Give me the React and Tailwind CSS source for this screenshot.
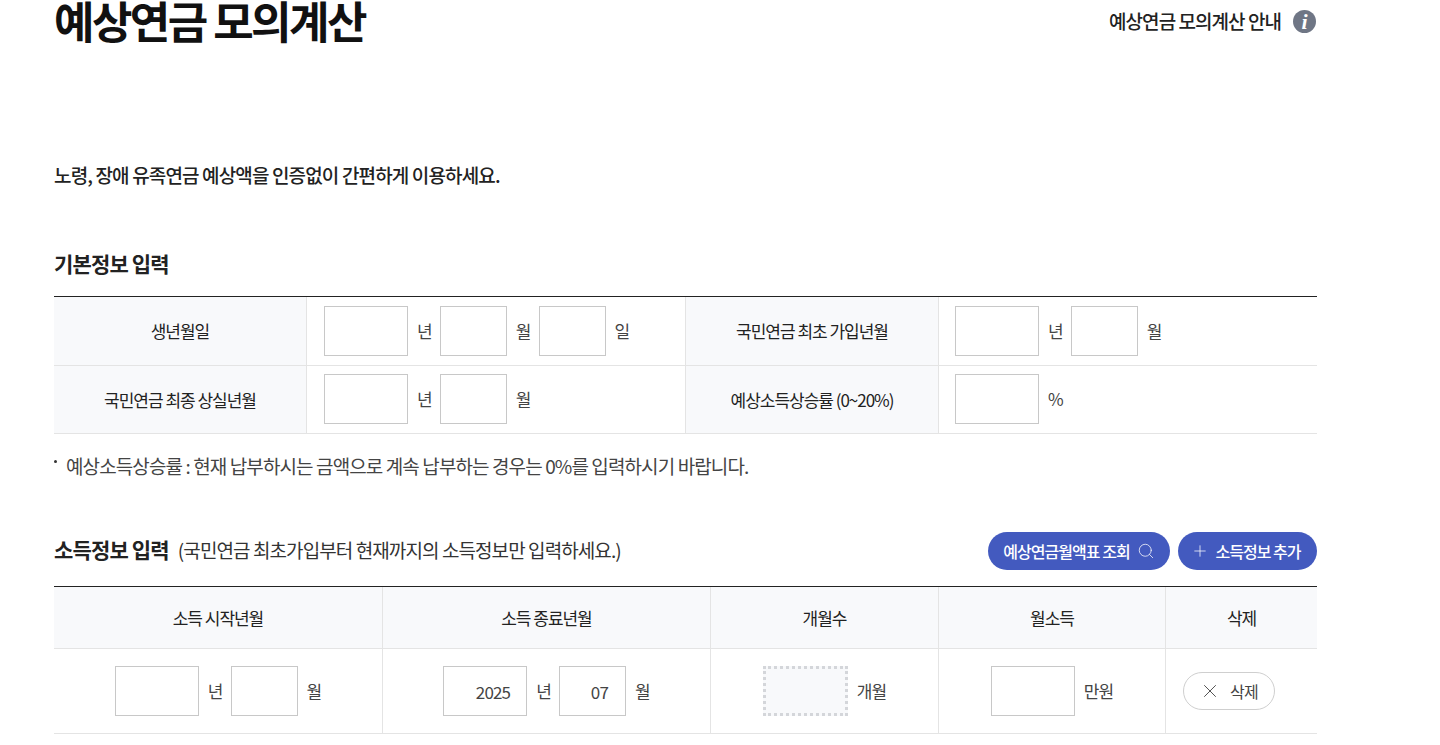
import React from 'react';
import { Search, Plus, X } from 'lucide-react';

const Box = ({ w = 'w-[84px]', value = '', pr = 'pr-[16px]', dotted = false }) => (
  <div
    className={`${w} h-[50px] flex items-center justify-end ${pr} pt-[2px] text-[17px] tracking-[-0.05em] text-[#444] ${
      dotted ? 'border-[3px] border-dotted border-[#d4d6da] bg-[#f8f9fb]' : 'border border-[#c8c8c8] bg-white'
    }`}
  >
    {value}
  </div>
);

const Unit = ({ children }) => <span className="text-[17px] tracking-[-0.05em] text-[#444] ml-[9px] mr-[8px] last:mr-0">{children}</span>;

const Th = ({ children, border = true }) => (
  <div className={`flex items-center justify-center bg-[#f8f9fb] border-b border-[#e4e4e4] text-[17px] text-[#222] tracking-[-0.06em] ${border ? 'border-r' : ''}`}>
    {children}
  </div>
);

const Td = ({ children, border = true, className = '' }) => (
  <div className={`flex items-center border-b border-[#e4e4e4] ${border ? 'border-r' : ''} ${className}`}>{children}</div>
);

const App = () => {
  return (
    <div className="w-[1440px] h-[745px] overflow-hidden bg-white font-['Noto_Sans_CJK_KR','Noto_Sans',sans-serif]">
      <div className="ml-[54px] w-[1263px]">
        <div className="flex items-start justify-between h-[58px]">
          <h1 className="mt-[-10px] text-[44px] leading-[60px] font-bold text-[#111] tracking-[-0.058em]">예상연금 모의계산</h1>
          <div className="flex items-center mt-[10px] mr-[1px]">
            <span className="text-[19px] leading-[24px] font-medium text-[#222] tracking-[-0.05em] mt-[-2px]">예상연금 모의계산 안내</span>
            <span className="ml-[12px] w-[23px] h-[23px] rounded-full bg-[#6f7685] text-white flex items-center justify-center text-[22px] font-bold italic font-['Liberation_Serif',serif]">i</span>
          </div>
        </div>

        <p className="mt-[103px] text-[19px] leading-[28px] font-medium text-[#222] tracking-[-0.045em]">
          노령, 장애 유족연금 예상액을 인증없이 간편하게 이용하세요.
        </p>

        <h2 className="mt-[59px] text-[21px] leading-[30px] font-bold text-[#222] tracking-[-0.04em]">기본정보 입력</h2>

        <div className="mt-[18px] border-t border-[#222] grid grid-cols-[253px_379px_253px_378px] grid-rows-[69px_68px]">
          <Th>생년월일</Th>
          <Td className="pl-[17px]">
            <Box /><Unit>년</Unit><Box w="w-[67px]" /><Unit>월</Unit><Box w="w-[67px]" /><Unit>일</Unit>
          </Td>
          <Th>국민연금 최초 가입년월</Th>
          <Td border={false} className="pl-[16px]">
            <Box /><Unit>년</Unit><Box w="w-[67px]" /><Unit>월</Unit>
          </Td>
          <Th>국민연금 최종 상실년월</Th>
          <Td className="pl-[17px] pb-[1px]">
            <Box /><Unit>년</Unit><Box w="w-[67px]" /><Unit>월</Unit>
          </Td>
          <Th>예상소득상승률 (0~20%)</Th>
          <Td border={false} className="pl-[16px] pb-[1px]">
            <Box /><Unit>%</Unit>
          </Td>
        </div>

        <div className="mt-[19px] flex items-start text-[19px] leading-[26px] text-[#444] tracking-[-0.047em]">
          <span className="w-[3px] h-[3px] bg-[#333] rounded-full mt-[7px] mr-[9px]" />
          <span>예상소득상승률 : 현재 납부하시는 금액으로 계속 납부하는 경우는 0%를 입력하시기 바랍니다.</span>
        </div>

        <div className="mt-[53px] flex items-center justify-between h-[38px]">
          <div className="flex items-center mb-[2px]">
            <h2 className="text-[21px] font-bold text-[#222] tracking-[-0.04em]">소득정보 입력</h2>
            <span className="ml-[9px] text-[19px] text-[#333] tracking-[-0.048em]">(국민연금 최초가입부터 현재까지의 소득정보만 입력하세요.)</span>
          </div>
          <div className="flex items-center gap-[8px]">
            <button className="h-[38px] w-[182px] rounded-full bg-[#435abf] text-white text-[16px] font-medium tracking-[-0.06em] flex items-center justify-center">
              예상연금월액표 조회
              <Search size={18} strokeWidth={1} className="ml-[7px]" />
            </button>
            <button className="h-[38px] w-[139px] rounded-full bg-[#435abf] text-white text-[16px] font-medium tracking-[-0.06em] flex items-center justify-center pr-[3px]">
              <Plus size={18} strokeWidth={1} className="mr-[6px]" />
              소득정보 추가
            </button>
          </div>
        </div>

        <div className="mt-[16px] border-t border-[#222] grid grid-cols-[329px_328px_228px_227px_151px] grid-rows-[62px_85px]">
          <Th>소득 시작년월</Th>
          <Th>소득 종료년월</Th>
          <Th>개월수</Th>
          <Th>월소득</Th>
          <Th border={false}>삭제</Th>
          <Td className="justify-center">
            <Box /><Unit>년</Unit><Box w="w-[67px]" /><Unit>월</Unit>
          </Td>
          <Td className="justify-center">
            <Box value="2025" /><Unit>년</Unit><Box w="w-[67px]" pr="pr-[17px]" value="07" /><Unit>월</Unit>
          </Td>
          <Td className="justify-center">
            <Box w="w-[85px]" dotted /><Unit>개월</Unit>
          </Td>
          <Td className="justify-center">
            <Box /><Unit>만원</Unit>
          </Td>
          <Td border={false} className="pl-[17px]">
            <button className="h-[38px] w-[92px] rounded-full border border-[#cfcfcf] bg-white text-[16px] text-[#444] tracking-[-0.05em] flex items-center justify-center pr-[1px]">
              <X size={22} strokeWidth={1} className="mr-[9px]" />
              삭제
            </button>
          </Td>
        </div>
      </div>
    </div>
  );
};

export default App;
